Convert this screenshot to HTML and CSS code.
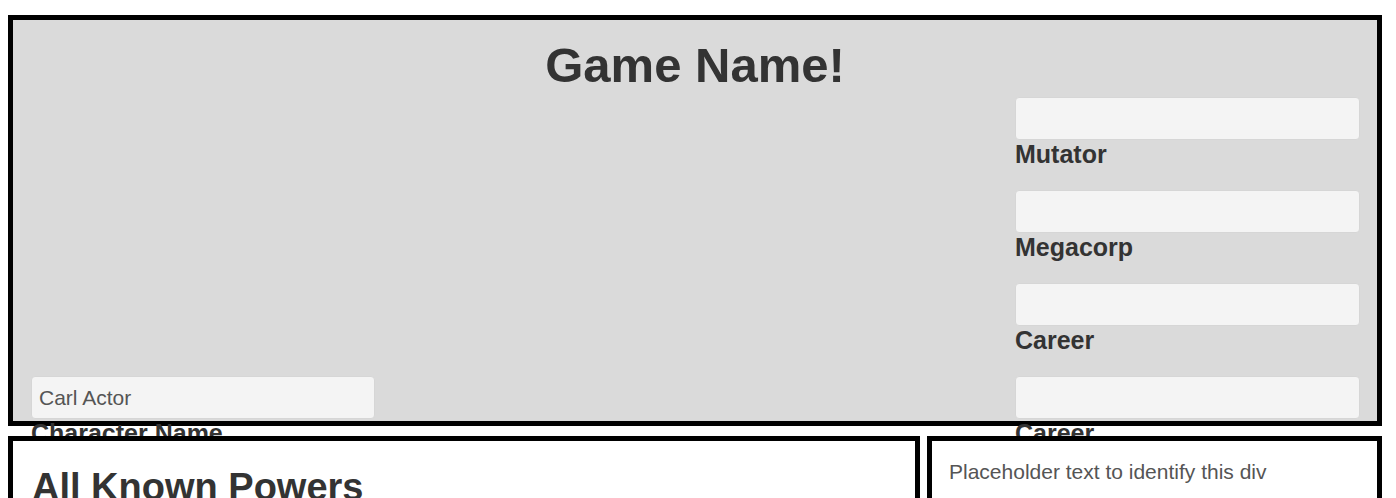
FILE: index.html
```html
<!DOCTYPE html>
<html lang="en">
<head>
<meta charset="utf-8">
<title>Game Name!</title>
<link rel="stylesheet" href="styles.css">
</head>
<body>
<div class="page">
  <header class="banner">
    <h1 class="title">Game Name!</h1>
    <div class="fields">
      <div class="col col-left">
        <div class="field">
          <input class="input" type="text" value="Carl Actor">
          <label class="label">Character Name</label>
        </div>
      </div>
      <div class="col col-right">
        <div class="field">
          <input class="input" type="text">
          <label class="label">Mutator</label>
        </div>
        <div class="field">
          <input class="input" type="text">
          <label class="label">Megacorp</label>
        </div>
        <div class="field">
          <input class="input" type="text">
          <label class="label">Career</label>
        </div>
        <div class="field">
          <input class="input" type="text">
          <label class="label">Career</label>
        </div>
      </div>
    </div>
  </header>
  <div class="panels">
    <section class="panel panel-main">
      <h2 class="panel-title">All Known Powers</h2>
    </section>
    <section class="panel panel-side">
      <p class="panel-text">Placeholder text to identify this div</p>
    </section>
  </div>
</div>
</body>
</html>
```
FILE: styles.css
```css
* { box-sizing: border-box; }

html, body {
  margin: 0;
  background: #ffffff;
}

body {
  font-family: "Liberation Sans", Arial, sans-serif;
  color: #333333;
}

.page {
  padding: 15px 14px 0 8px;
}

.banner {
  height: 411px;
  border: 5px solid #000000;
  background: #dadada;
}

.title {
  margin: 18px 0 0;
  font-size: 49px;
  line-height: 54px;
  font-weight: bold;
  text-align: center;
  color: #333333;
}

.fields {
  display: flex;
  justify-content: space-between;
  align-items: flex-end;
  margin-top: 5px;
  padding: 0 17px 0 18px;
}

.col-left { width: 344px; }
.col-right { width: 345px; }

.field {
  display: flex;
  flex-direction: column;
  margin-bottom: 21px;
}

.input {
  display: block;
  width: 100%;
  height: 43px;
  margin: 0;
  padding: 0 7px;
  border: 1px solid #d6d6d6;
  border-radius: 4px;
  background: #f4f4f4;
  font-family: "Liberation Sans", Arial, sans-serif;
  font-size: 21px;
  color: #555555;
  outline: none;
}

.label {
  display: block;
  font-size: 25px;
  line-height: 29px;
  font-weight: bold;
  color: #333333;
}

.panels {
  display: flex;
  gap: 7px;
  margin-top: 10px;
}

.panel {
  border: 5px solid #000000;
  background: #ffffff;
  min-height: 220px;
}

.panel-main {
  flex: 0 0 912px;
  padding: 25px 19px;
}

.panel-side {
  flex: 1 1 auto;
  padding: 16px 17px;
}

.panel-title {
  margin: 0;
  font-size: 38px;
  line-height: 42px;
  font-weight: bold;
  color: #333333;
}

.panel-text {
  margin: 0;
  font-size: 21px;
  line-height: 30px;
  color: #555555;
}
```
